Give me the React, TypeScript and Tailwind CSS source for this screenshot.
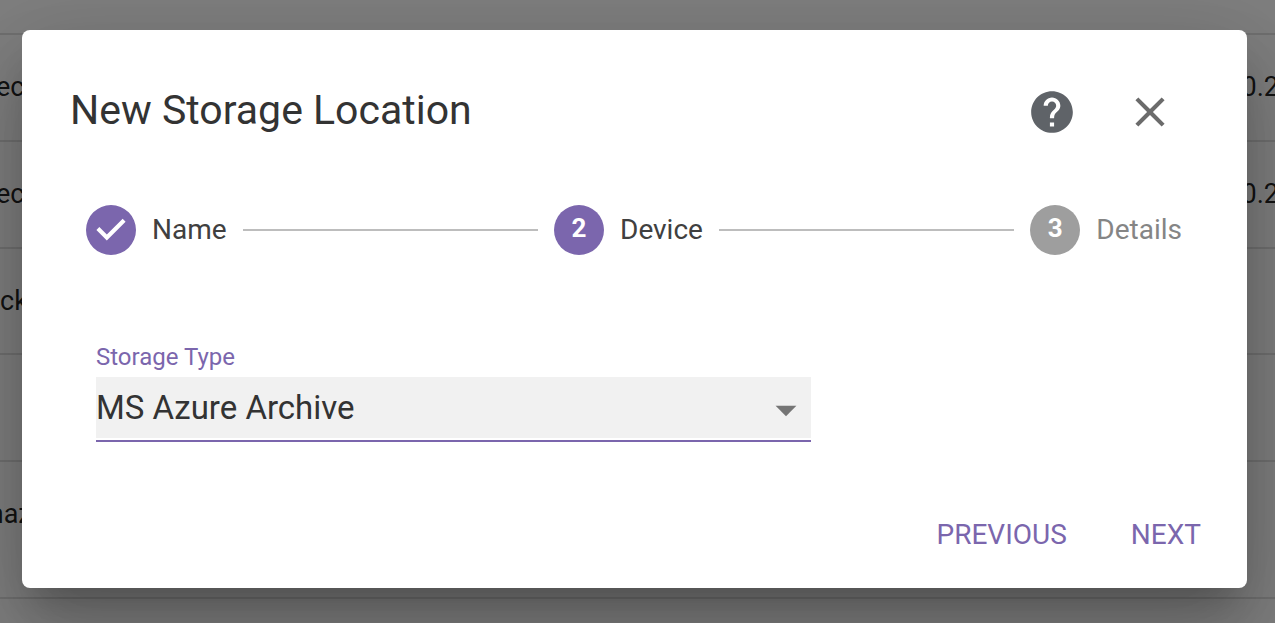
import React, { useState } from "react";

type Row = { id: string; name: string; nameClass: string; size: string; height: string };

const rows: Row[] = [
  { id: "r1", name: "ec", nameClass: "-ml-1", size: "0.2", height: "h-[107px]" },
  { id: "r2", name: "ec", nameClass: "-ml-1", size: "0.2", height: "h-[107px]" },
  { id: "r3", name: "ck", nameClass: "ml-0", size: "", height: "h-[106px]" },
  { id: "r4", name: "", nameClass: "ml-0", size: "", height: "h-[107px]" },
  { id: "r5", name: "maz", nameClass: "-ml-5", size: "", height: "h-[137px]" },
];

function LocationsTable() {
  return (
    <table className="w-full table-fixed border-collapse text-[27px] leading-8 text-black/87">
      <tbody>
        <tr className="h-[34px] border-b-2 border-[#e0e0e0]">
          <td />
          <td />
        </tr>
        {rows.map((row) => (
          <tr key={row.id} className={`${row.height} border-b-2 border-[#e0e0e0] align-top`}>
            <td className="overflow-hidden p-0 pt-9">
              <div className={row.nameClass}>{row.name}</div>
            </td>
            <td className="overflow-hidden p-0 pt-9 text-right">
              <div className="-mr-1">{row.size}</div>
            </td>
          </tr>
        ))}
      </tbody>
    </table>
  );
}

function StepIcon({ step, done, active }: { step: number; done?: boolean; active?: boolean }) {
  if (done) {
    return (
      <svg viewBox="0 0 24 24" className="size-[50px] shrink-0 fill-[#7b66ad]" aria-hidden="true">
        <path d="M12 0a12 12 0 1 0 0 24 12 12 0 0 0 0-24zm-2 17l-5-5 1.4-1.4 3.6 3.6 7.6-7.6L19 8l-9 9z" />
      </svg>
    );
  }
  return (
    <span
      className={`flex size-[50px] shrink-0 items-center justify-center rounded-full pb-1 text-[26px] leading-8 font-bold text-white ${
        active ? "bg-[#7b66ad]" : "bg-[#9e9e9e]"
      }`}
    >
      {step}
    </span>
  );
}

function Connector() {
  return <li aria-hidden="true" className="h-0.5 flex-1 bg-[#bdbdbd]" />;
}

export default function App() {
  const [type, setType] = useState("MS Azure Archive");
  return (
    <div className="relative min-h-screen overflow-hidden bg-white font-[Roboto,sans-serif]">
      <LocationsTable />
      <div className="absolute inset-0 bg-black/50 pt-[30px] pr-7 pl-[22px]">
        <section
          role="dialog"
          aria-modal="true"
          aria-labelledby="dialog-title"
          className="rounded-lg bg-white pb-7 shadow-[0_23px_31px_-14px_rgba(0,0,0,0.2),0_50px_78px_6px_rgba(0,0,0,0.14),0_19px_95px_16px_rgba(0,0,0,0.12)]"
        >
          <header className="flex items-center gap-12 pt-14 pr-[72px] pl-12">
            <h2 id="dialog-title" className="flex-1 pb-1 text-[41px] leading-[48px] text-[#333]">
              New Storage Location
            </h2>
            <button type="button" aria-label="Help">
              <svg viewBox="0 0 24 24" className="size-[50px] fill-[#5f6368]">
                <path d="M12 2C6.48 2 2 6.48 2 12s4.48 10 10 10 10-4.480 10-10S17.520 2 12 2zm1 17h-2v-2h2v2zm2.070-7.750l-.9.92C13.450 12.900 13 13.500 13 15h-2v-.5c0-1.100.45-2.100 1.170-2.830l1.240-1.260c.37-.36.59-.86.59-1.410 0-1.100-.9-2-2-2s-2 .9-2 2H8c0-2.210 1.790-4 4-4s4 1.790 4 4c0 .88-.36 1.680-.93 2.250z" />
              </svg>
            </button>
            <button type="button" aria-label="Close">
              <svg viewBox="0 0 24 24" className="size-[50px] fill-[#6b6b6b]">
                <path d="M19 6.410L17.590 5 12 10.590 6.410 5 5 6.410 10.590 12 5 17.590 6.410 19 12 13.410 17.590 19 19 17.590 13.410 12z" />
              </svg>
            </button>
          </header>

          <ol className="flex items-center gap-4 pt-[67px] pr-[65px] pl-16 text-[28px] leading-8 text-[#404040]">
            <li className="flex items-center gap-4">
              <StepIcon step={1} done />
              Name
            </li>
            <Connector />
            <li className="flex items-center gap-4" aria-current="step">
              <StepIcon step={2} active />
              Device
            </li>
            <Connector />
            <li className="flex items-center gap-4 text-[#858585]">
              <StepIcon step={3} />
              Details
            </li>
          </ol>

          <div className="pt-[86px]">
            <div className="ml-[74px] w-7/12">
              <label htmlFor="storage-type" className="block pb-1 text-[24px] leading-8 text-[#7b66ad]">
                Storage Type
              </label>
              <div className="relative border-b-2 border-[#7b66ad] pb-0.5">
                <select
                  id="storage-type"
                  value={type}
                  onChange={(e) => setType(e.target.value)}
                  className="block h-[61px] w-full appearance-none bg-[#f1f1f1] text-[33px] leading-10 text-[#333] outline-none"
                >
                  <option>MS Azure Archive</option>
                  <option>MS Azure</option>
                </select>
                <svg
                  viewBox="0 0 24 24"
                  aria-hidden="true"
                  className="pointer-events-none absolute top-2 right-0 size-[50px] fill-[#757575]"
                >
                  <path d="M7 10l5 5 5-5z" />
                </svg>
              </div>
            </div>
          </div>

          <footer className="flex justify-end gap-8 pt-[68px] pr-[30px] text-[28px] leading-[50px] text-[#7b66ad]">
            <button type="button" className="px-4">PREVIOUS</button>
            <button type="button" className="px-4">NEXT</button>
          </footer>
        </section>
      </div>
    </div>
  );
}
